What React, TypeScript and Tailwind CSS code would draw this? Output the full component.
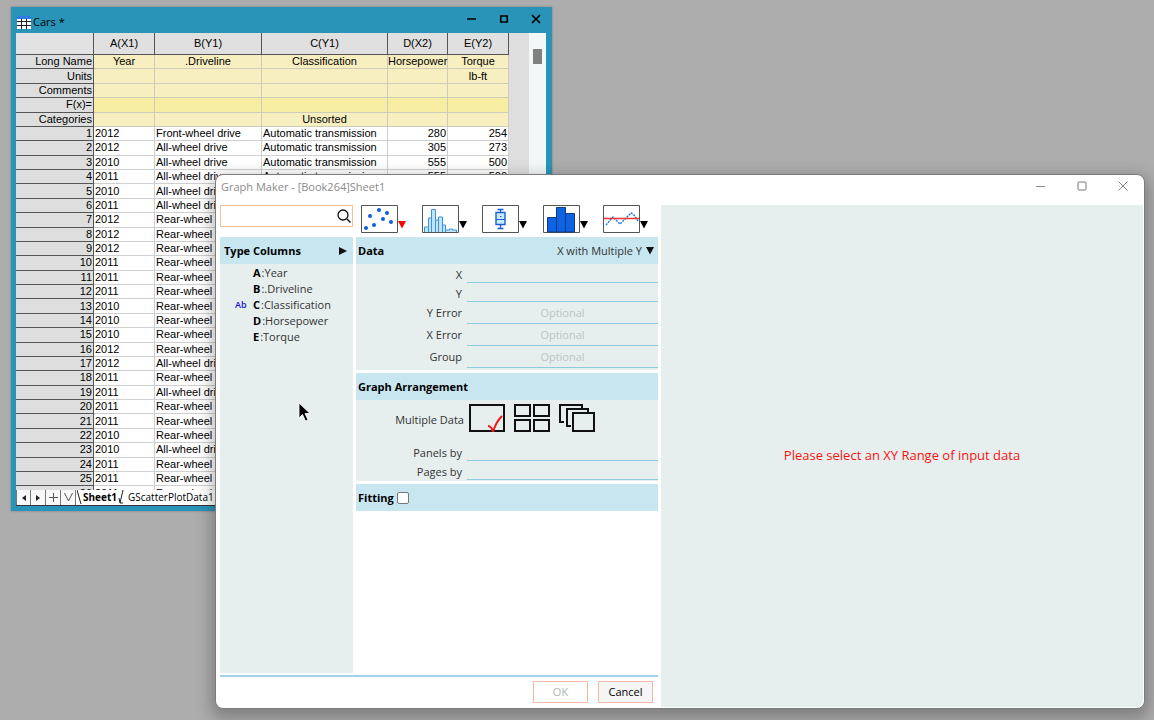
import React, { useState } from 'react';
import clsx from 'clsx';

interface CarRow {
  year: number;
  driveline: string;
  classification?: string;
  horsepower?: number;
  torque?: number;
}

const FRONT = 'Front-wheel drive';
const ALL = 'All-wheel drive';
const REAR = 'Rear-wheel drive';
const AUTO = 'Automatic transmission';

const rows: CarRow[] = [
  { year: 2012, driveline: FRONT, classification: AUTO, horsepower: 280, torque: 254 },
  { year: 2012, driveline: ALL, classification: AUTO, horsepower: 305, torque: 273 },
  { year: 2010, driveline: ALL, classification: AUTO, horsepower: 555, torque: 500 },
  { year: 2011, driveline: ALL, classification: AUTO, horsepower: 555, torque: 500 },
  { year: 2010, driveline: ALL },
  { year: 2011, driveline: ALL },
  { year: 2012, driveline: REAR },
  { year: 2012, driveline: REAR },
  { year: 2012, driveline: REAR },
  { year: 2011, driveline: REAR },
  { year: 2011, driveline: REAR },
  { year: 2011, driveline: REAR },
  { year: 2010, driveline: REAR },
  { year: 2010, driveline: REAR },
  { year: 2010, driveline: REAR },
  { year: 2012, driveline: REAR },
  { year: 2012, driveline: ALL },
  { year: 2011, driveline: REAR },
  { year: 2011, driveline: ALL },
  { year: 2011, driveline: REAR },
  { year: 2011, driveline: REAR },
  { year: 2010, driveline: REAR },
  { year: 2010, driveline: ALL },
  { year: 2011, driveline: REAR },
  { year: 2011, driveline: REAR },
  { year: 2011, driveline: REAR },
];

const labelRows = [
  { name: 'Long Name', cells: ['Year', '.Driveline', 'Classification', 'Horsepower', 'Torque'] },
  { name: 'Units', cells: ['', '', '', '', 'lb-ft'] },
  { name: 'Comments', cells: ['', '', '', '', ''] },
  { name: 'F(x)=', cells: ['', '', '', '', ''] },
  { name: 'Categories', cells: ['', '', 'Unsorted', '', ''] },
];

const columns = [
  { id: 'A', name: 'Year' },
  { id: 'B', name: '.Driveline' },
  { id: 'C', name: 'Classification', type: 'Ab' },
  { id: 'D', name: 'Horsepower' },
  { id: 'E', name: 'Torque' },
];

const Caret: React.FC<{ className?: string }> = ({ className }) => (
  <svg width="8" height="8" viewBox="0 0 8 8" className={className} aria-hidden="true">
    <path d="M0 0h8L4 7.500z" fill="currentColor" />
  </svg>
);

/* ---------- workbook window ---------- */

const Workbook: React.FC = () => {
  const rowHead = 'border-r border-b border-[#555] bg-[#dedede] pr-px text-right font-normal';
  const cell = 'border-r border-b border-[#cfcfcf] bg-white';
  const navButton = 'flex w-[15px] items-center justify-center border-r border-[#777] bg-[#f8f8f8]';

  return (
    <section className="absolute top-[7px] left-[11px] border-r-[6px] border-b-[5px] border-l-[5px] border-[#2a94b8] bg-[#2a94b8] shadow-[0_0_2px_#777]">
      <header className="flex h-[26px] items-center pt-1 pr-[5px] pl-px font-['Open_Sans',sans-serif] text-[11px] text-black">
        <svg width="14" height="13" viewBox="0 0 14 13" aria-hidden="true">
          <path d="M0 0h14v13H0z" fill="#fff" />
          <path d="M0 0h14v3H0z" fill="#2f7ae5" />
          <path d="M0 5.500h14M0 9.500h14M4.500 3v10M9.500 3v10" stroke="#222" />
        </svg>
        <h1 className="ml-[2px] flex-1">Cars *</h1>
        <div className="flex gap-[22px] pb-[6px]">
          <button aria-label="Minimize">
            <svg width="10" height="10" viewBox="0 0 10 10"><path d="M0 5h9" stroke="#000" strokeWidth="1.500" /></svg>
          </button>
          <button aria-label="Maximize">
            <svg width="10" height="10" viewBox="0 0 10 10"><path d="M1.750 2h6.500v6h-6.500z" fill="none" stroke="#000" strokeWidth="1.600" /></svg>
          </button>
          <button aria-label="Close">
            <svg width="10" height="10" viewBox="0 0 10 10"><path d="M1 1l8 8M9 1L1 9" stroke="#000" strokeWidth="1.700" /></svg>
          </button>
        </div>
      </header>

      <div className="flex h-[457px] overflow-hidden bg-[#dedede]">
        <table className="h-[468px] w-[493px] table-fixed border-separate border-spacing-0 font-['Liberation_Sans',Arial,sans-serif] text-[11px] leading-[13px] whitespace-nowrap text-black">
          <colgroup>
            <col className="w-[78px]" />
            <col className="w-[61px]" />
            <col className="w-[107px]" />
            <col className="w-[126px]" />
            <col className="w-[60px]" />
            <col className="w-[61px]" />
          </colgroup>
          <thead>
            <tr className="h-[22px]">
              <td className="border-r border-b border-[#555] bg-[#e2e2e2]" />
              {['A(X1)', 'B(Y1)', 'C(Y1)', 'D(X2)', 'E(Y2)'].map((h) => (
                <th key={h} scope="col" className="border-r border-b border-[#555] bg-[#e0e0e0] font-normal">{h}</th>
              ))}
            </tr>
          </thead>
          <tbody>
            {labelRows.map((r) => (
              <tr key={r.name}>
                <th scope="row" className={rowHead}>{r.name}</th>
                {r.cells.map((c, i) => (
                  <td
                    key={i}
                    className={clsx(
                      'border-r border-b border-[#cdccb8] text-center',
                      r.name === 'F(x)=' ? 'bg-[#f7eda3]' : 'bg-[#f7efbf]'
                    )}
                  >
                    {c}
                  </td>
                ))}
              </tr>
            ))}
            {rows.map((r, i) => (
              <tr key={i}>
                <th scope="row" className={rowHead}>{i + 1}</th>
                <td className={clsx(cell, 'pl-px')}>{r.year}</td>
                <td className={clsx(cell, 'pl-px')}>{r.driveline}</td>
                <td className={clsx(cell, 'pl-px')}>{r.classification}</td>
                <td className={clsx(cell, 'pr-px text-right')}>{r.horsepower}</td>
                <td className={clsx(cell, 'pr-px text-right')}>{r.torque}</td>
              </tr>
            ))}
          </tbody>
        </table>
        <div className="w-5" />
        <div className="w-[17px] bg-[#f4f7f7] px-1 pt-4">
          <div className="h-[15px] w-[9px] bg-[#808080]" />
        </div>
      </div>

      <nav className="flex h-4 border-b border-[#333] bg-white font-['Open_Sans',sans-serif] text-[10px] leading-[15px] text-black">
        <button className={clsx(navButton, 'border-l')} aria-label="Previous sheet">
          <svg width="4" height="6" viewBox="0 0 4 6"><path d="M4 0v6L0 3z" fill="#222" /></svg>
        </button>
        <button className={navButton} aria-label="Next sheet">
          <svg width="4" height="6" viewBox="0 0 4 6"><path d="M0 0v6l4-3z" fill="#222" /></svg>
        </button>
        <button className={navButton} aria-label="Add sheet">
          <svg width="9" height="9" viewBox="0 0 9 9"><path d="M0 4.500h9M4.500 0v9" stroke="#555" /></svg>
        </button>
        <button className={navButton} aria-label="Sheet list">
          <svg width="9" height="9" viewBox="0 0 9 9"><path d="M.5 0l4 8 4-8" fill="none" stroke="#555" /></svg>
        </button>
        <svg width="5" height="14" viewBox="0 0 5 14" className="mr-px ml-px" aria-hidden="true"><path d="M0 0l4 14" stroke="#222" /></svg>
        <button className="font-bold">Sheet1</button>
        <svg width="6" height="14" viewBox="0 0 6 14" className="ml-px" aria-hidden="true"><path d="M5 0L2 13H5M1 8l1 5" fill="none" stroke="#222" /></svg>
        <button className="ml-1">GScatterPlotData1</button>
      </nav>
    </section>
  );
};

/* ---------- plot type pictures ---------- */

const plotTypes = [
  {
    name: 'Scatter',
    art: (
      <g fill="#0b5fd8">
        <circle cx="5" cy="23" r="2" />
        <circle cx="9" cy="11" r="2" />
        <circle cx="13" cy="20" r="2" />
        <circle cx="18" cy="5" r="2" />
        <circle cx="22" cy="14" r="2" />
        <circle cx="26" cy="8" r="2" />
        <circle cx="30" cy="17" r="2" />
      </g>
    ),
  },
  {
    name: 'Histogram',
    art: (
      <path
        d="M2.500 27v-5h4v-9h3V4.500h4V15h3V12h4v8h3v5h4v-1h3v1h4v2M6.500 22v5M9.500 13v14M13.500 15v12M16.500 15v12M20.500 20v7M23.500 25v2"
        fill="#bfe6fa"
        stroke="#3d8fe0"
      />
    ),
  },
  {
    name: 'Box',
    art: (
      <g fill="none" stroke="#1c5fd0">
        <path d="M18.500 4v4M18.500 19v5M15.500 4.500h6M15.500 23.500h6" strokeWidth="1.400" />
        <path d="M14 7.500h9v12h-9z" fill="#c9ecfb" strokeWidth="1.400" />
        <path d="M14 14.500h9M18 11.500h1.500" />
      </g>
    ),
  },
  {
    name: 'Column',
    art: (
      <g fill="#0d63e3" stroke="#123a7a">
        <path d="M4.500 12.500h9V27h-9z" />
        <path d="M22.500 8.500h9V27h-9z" />
        <path d="M13.500 2.500h9V27h-9z" />
      </g>
    ),
  },
  {
    name: 'Line',
    art: (
      <g fill="none">
        <path d="M3 20l7-8 7 7 11-11 3 2 4 6" stroke="#2a7de0" strokeWidth="1.500" strokeDasharray="2 1" />
        <path d="M1 13.500h35" stroke="#e33" strokeWidth="1.300" />
      </g>
    ),
  },
];

const arrangements = [
  {
    id: 'single',
    label: 'Same layer',
    art: (
      <>
        <path d="M1 1h34v26H1z" />
        <path d="M19 22c2 0 4 2 5 6 2-7 5-12 9-16" stroke="#f01818" strokeWidth="2" />
      </>
    ),
  },
  {
    id: 'panels',
    label: 'Separate panels',
    art: <path d="M1 1h15v11H1zM20 1h15v11H20zM1 16h15v11H1zM20 16h15v11H20z" />,
  },
  {
    id: 'pages',
    label: 'Separate pages',
    art: (
      <>
        <path d="M5 18H1V1h22v3" />
        <path d="M12 22H8V5h21v4" />
        <path d="M14 9h21v18H14z" />
      </>
    ),
  },
];

/* ---------- dialog parts ---------- */

interface FieldProps {
  id: string;
  label: string;
  placeholder?: string;
  tall?: boolean;
}

const Field: React.FC<FieldProps> = ({ id, label, placeholder, tall }) => (
  <div className={clsx('flex items-center', tall ? 'h-[22px]' : 'h-[19px]')}>
    <label htmlFor={id} className={clsx('w-[111px] pr-[5px] text-right text-[#333]', !tall && 'pt-[3px]')}>
      {label}
    </label>
    <input
      id={id}
      type="text"
      placeholder={placeholder}
      className="h-full min-w-0 flex-1 border-b border-[#8ccbe0] bg-transparent text-center text-[11px] outline-none placeholder:text-[#bfc4c4]"
    />
  </div>
);

const GraphMaker: React.FC = () => {
  const [search, setSearch] = useState('');
  const [plot, setPlot] = useState('Scatter');
  const [fitting, setFitting] = useState(false);

  const band = 'flex h-[27px] shrink-0 items-center bg-[#c7e6f0] pt-px text-black';

  return (
    <section className="absolute top-[174px] right-[9px] bottom-[11px] left-[215px] flex flex-col rounded-lg border border-[#7c7c7c] bg-white font-['Open_Sans',sans-serif] text-[11px] text-[#333] shadow-[0_6px_16px_4px_rgba(0,0,0,0.26)]">
      <header className="flex h-[30px] shrink-0 items-start pt-1 pr-4 pl-[5px]">
        <h2 className="flex-1 text-[#8a8a8a]">Graph Maker - [Book264]Sheet1</h2>
        <div className="flex gap-[31px] pt-[2px]">
          <button aria-label="Minimize dialog">
            <svg width="10" height="10" viewBox="0 0 10 10"><path d="M0 5.500h9" stroke="#888" /></svg>
          </button>
          <button aria-label="Maximize dialog">
            <svg width="10" height="10" viewBox="0 0 10 10"><rect x="1" y="1" width="8" height="8" rx="1" fill="none" stroke="#777" /></svg>
          </button>
          <button aria-label="Close dialog">
            <svg width="10" height="10" viewBox="0 0 10 10"><path d="M.5.500l9 9M9.500.500l-9 9" stroke="#888" /></svg>
          </button>
        </div>
      </header>

      <div className="flex min-h-0 flex-1">
        <div className="ml-1 flex w-[438px] flex-col">
          <div className="flex h-8 items-start gap-2">
            <div className="flex h-[22px] w-[133px] items-center border border-[#f6bf9d] pr-px">
              <input
                type="text"
                aria-label="Search"
                value={search}
                onChange={(e) => setSearch(e.target.value)}
                className="h-full min-w-0 flex-1 px-1 outline-none"
              />
              <svg width="14" height="14" viewBox="0 0 14 14" aria-hidden="true">
                <path d="M10 10l3.500 3.500" stroke="#111" strokeWidth="1.500" />
                <circle cx="6" cy="6" r="5" fill="none" stroke="#111" strokeWidth="1.300" />
              </svg>
            </div>
            <div className="flex w-[287px] justify-between">
              {plotTypes.map((p) => (
                <button
                  key={p.name}
                  aria-label={p.name}
                  onClick={() => setPlot(p.name)}
                  className="flex items-end text-black"
                >
                  <svg width="37" height="28" viewBox="0 0 37 28" aria-hidden="true">
                    <path d="M.5.500h36v27H.5z" fill="#fff" stroke="#555" />
                    {p.art}
                  </svg>
                  <Caret className={clsx('mb-1', plot === p.name && 'text-[#f00]')} />
                </button>
              ))}
            </div>
          </div>

          <div className="flex min-h-0 flex-1 gap-[3px]">
            <aside className="flex w-[133px] flex-col bg-[#e6efee]">
              <div className={clsx(band, 'justify-between pr-[6px] pl-1')}>
                <h3 className="font-bold">Type Columns</h3>
                <button aria-label="Expand columns">
                  <svg width="8" height="8" viewBox="0 0 8 8"><path d="M0 0v8l8-4z" fill="#111" /></svg>
                </button>
              </div>
              <ul className="pt-px leading-[16px]">
                {columns.map((c) => (
                  <li key={c.id} className="flex">
                    <span className="w-[33px] pl-[15px] text-[9px] font-semibold text-[#1414dc]">{c.type}</span>
                    <b className="mr-px text-black">{c.id}</b>
                    <span>:{c.name}</span>
                  </li>
                ))}
              </ul>
            </aside>

            <form className="flex flex-1 flex-col gap-[3px]" onSubmit={(e) => e.preventDefault()}>
              <div className="bg-[#e6efee] pb-[2px]">
                <div className={clsx(band, 'justify-between pr-1 pl-[2px]')}>
                  <h3 className="font-bold">Data</h3>
                  <div className="flex items-center gap-1">
                    <select aria-label="Data mode" className="field-sizing-content appearance-none bg-transparent text-[#333] outline-none">
                      <option>X with Multiple Y</option>
                    </select>
                    <Caret className="text-[#111]" />
                  </div>
                </div>
                <Field id="x" label="X" />
                <Field id="y" label="Y" />
                <Field id="y-error" label="Y Error" placeholder="Optional" tall />
                <Field id="x-error" label="X Error" placeholder="Optional" tall />
                <Field id="group" label="Group" placeholder="Optional" tall />
              </div>

              <div className="bg-[#e6efee] pb-px">
                <div className={clsx(band, 'pl-[2px]')}>
                  <h3 className="font-bold">Graph Arrangement</h3>
                </div>
                <div className="flex h-[42px] items-start pt-1">
                  <span className="w-[113px] pt-2 pr-[5px] text-right">Multiple Data</span>
                  <div className="flex gap-[9px]">
                    {arrangements.map((a) => (
                      <button key={a.id} type="button" aria-label={a.label}>
                        <svg width="36" height="28" viewBox="0 0 36 28" fill="none" stroke="#111" strokeWidth="2" aria-hidden="true">
                          {a.art}
                        </svg>
                      </button>
                    ))}
                  </div>
                </div>
                <Field id="panels-by" label="Panels by" />
                <Field id="pages-by" label="Pages by" />
              </div>

              <label className={clsx(band, 'gap-[3px] pl-[2px] font-bold')}>
                Fitting
                <input
                  type="checkbox"
                  checked={fitting}
                  onChange={(e) => setFitting(e.target.checked)}
                  className="size-3 appearance-none rounded-[2px] border border-[#777] bg-white checked:bg-[#2a94b8]"
                />
              </label>
            </form>
          </div>

          <footer className="mt-[2px] flex h-[33px] shrink-0 items-start justify-end gap-[10px] border-t-2 border-[#a5d2e8] pt-1 pr-[5px]">
            <button disabled className="h-[22px] w-[55px] border border-[#f4b9a4] text-[#b5b5b5]">OK</button>
            <button className="h-[22px] w-[55px] border border-[#f4b9a4] bg-[#f5f5f5] text-black">Cancel</button>
          </footer>
        </div>

        <div className="mr-px mb-px ml-[3px] flex flex-1 items-center justify-center rounded-br-md bg-[#e6efee]">
          <p className="text-[13px] text-[#f51414]">Please select an XY Range of input data</p>
        </div>
      </div>
    </section>
  );
};

const App: React.FC = () => (
  <main className="relative min-h-screen overflow-hidden bg-[#adadad]">
    <Workbook />
    <GraphMaker />
    <svg width="13" height="20" viewBox="0 0 13 20" className="pointer-events-none absolute top-[402px] left-[298px]" aria-hidden="true">
      <path d="M1 1v15l3.500-3.500L7.500 19l2.500-1-3-6.500h5z" fill="#000" stroke="#fff" strokeWidth=".8" />
    </svg>
  </main>
);

export default App;
